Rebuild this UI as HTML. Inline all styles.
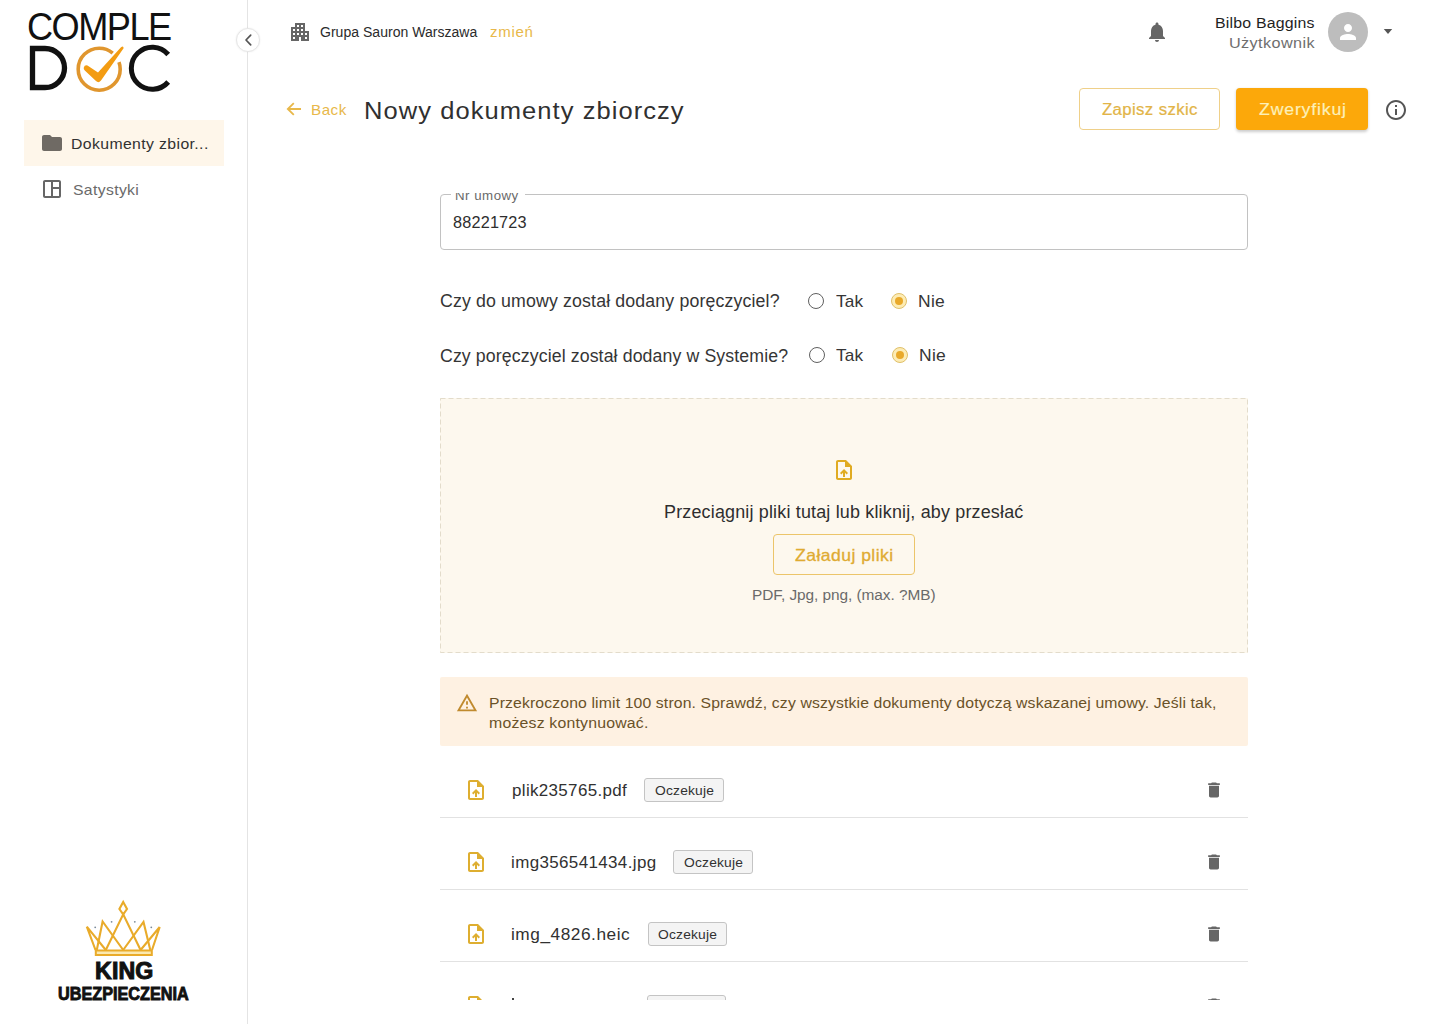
<!DOCTYPE html>
<html><head><meta charset="utf-8">
<style>
*{box-sizing:border-box;margin:0;padding:0}
html,body{width:1440px;height:1024px;overflow:hidden;background:#fff;font-family:"Liberation Sans",sans-serif;color:#222}
.t{position:absolute;white-space:nowrap;font-family:"Liberation Sans",sans-serif}
.a{position:absolute}
svg{position:absolute;overflow:visible}
</style></head><body>
<!-- sidebar -->
<div class="a" style="left:247px;top:0;width:1px;height:1024px;background:#e4e4e4"></div>
<div class="a" style="left:24px;top:120px;width:200px;height:46px;background:#fef6ea"></div>
<!-- logo DOC -->
<svg style="left:0;top:0" width="248" height="100" viewBox="0 0 248 100">
  <path d="M32.5,48.5 H45 A19.5,19.5 0 0 1 45,87.5 H32.5 Z" fill="none" stroke="#111" stroke-width="5.3"/>
  <path d="M168.2,54.5 A21,21 0 1 0 168.2,82" fill="none" stroke="#111" stroke-width="5"/>
  <circle cx="99.2" cy="69.2" r="21" fill="none" stroke="#e0962e" stroke-width="3.6" stroke-dasharray="112.9 11 20" />
  <path d="M83.8,67.5 Q84.5,64.8 87.5,65.5 L98,72.5 L121,47.2 Q123.6,45.6 123.6,48.2 L101,80.5 Q98.5,83.5 96,81 L84.8,70.5 Q83.3,69 83.8,67.5 Z" fill="#f39c12"/>
</svg>
<!-- folder icon -->
<svg style="left:40px;top:131px" width="24" height="24" viewBox="0 0 24 24"><path fill="#6f6a64" d="M10 4H4c-1.1 0-1.99.9-1.99 2L2 18c0 1.1.9 2 2 2h16c1.1 0 2-.9 2-2V8c0-1.1-.9-2-2-2h-8l-2-2z"/></svg>
<!-- dashboard icon -->
<svg style="left:40px;top:177px" width="24" height="24" viewBox="0 0 24 24"><path fill="#666" d="M19 3H5c-1.1 0-2 .9-2 2v14c0 1.1.9 2 2 2h14c1.1 0 2-.9 2-2V5c0-1.1-.9-2-2-2zM5 19V5h6v14H5zm14 0h-6v-7h6v7zm0-9h-6V5h6v5z"/></svg>
<!-- crown -->
<svg style="left:0;top:0" width="248" height="1024" viewBox="0 0 248 1024">
  <g fill="none" stroke="#e9ab2a" stroke-width="2.1" stroke-linejoin="miter">
    <path d="M123.2,902 L127,909 L123.2,914.4 L119.4,909 Z"/>
    <path d="M86.8,926.6 L95.5,950 M86.8,926.6 L105.8,950"/>
    <path d="M96.8,950 L102.6,921.5 L123.2,950"/>
    <path d="M105.8,950 L123.2,914.4 L140.6,950"/>
    <path d="M123.2,950 L143.5,922 L150.3,950"/>
    <path d="M159.7,927 L152,950 M159.7,927 L140.6,950"/>
    <path d="M95.8,950.6 H151.8 V955 H95.8 Z" stroke-width="2" fill="#fbe9b0"/>
  </g>
  <g fill="#7a8a99"><circle cx="95.2" cy="927.3" r="0.9"/><circle cx="111.6" cy="921.8" r="0.9"/><circle cx="134.8" cy="921.8" r="0.9"/><circle cx="151.3" cy="927.3" r="0.9"/></g>
</svg>
<!-- collapse button -->
<div class="a" style="left:236px;top:27.5px;width:24px;height:24px;border-radius:50%;background:#fff;border:1px solid #e6e6e6;box-shadow:0 0 2px rgba(0,0,0,.08)"></div>
<svg style="left:236px;top:27.5px" width="24" height="24" viewBox="0 0 24 24"><path d="M14.7 7.2 L10 12 L14.7 16.8" fill="none" stroke="#555" stroke-width="1.7" stroke-linecap="round" stroke-linejoin="round"/></svg>

<!-- top bar icons -->
<svg style="left:287.5px;top:20px" width="24" height="24" viewBox="0 0 24 24"><path fill="#666" d="M17 11V3H7v4H3v14h8v-4h2v4h8V11h-4zM7 19H5v-2h2v2zm0-4H5v-2h2v2zm0-4H5V9h2v2zm4 4H9v-2h2v2zm0-4H9V9h2v2zm0-4H9V5h2v2zm4 8h-2v-2h2v2zm0-4h-2V9h2v2zm0-4h-2V5h2v2zm4 12h-2v-2h2v2zm0-4h-2v-2h2v2z"/></svg>
<svg style="left:1145px;top:19.5px" width="24" height="24" viewBox="0 0 24 24"><path fill="#666" d="M12 22c1.1 0 2-.9 2-2h-4c0 1.1.89 2 2 2zm6-6v-5c0-3.07-1.64-5.64-4.5-6.32V4c0-.83-.67-1.5-1.5-1.5s-1.5.67-1.5 1.5v.68C7.63 5.36 6 7.92 6 11v5l-2 2v1h16v-1l-2-2z"/></svg>
<div class="a" style="left:1328px;top:12px;width:40px;height:40px;border-radius:50%;background:#bdbdbd"></div>
<svg style="left:1336px;top:20px" width="24" height="24" viewBox="0 0 24 24"><path fill="#fff" d="M12 12c2.21 0 4-1.79 4-4s-1.79-4-4-4-4 1.79-4 4 1.79 4 4 4zm0 2c-2.67 0-8 1.34-8 4v2h16v-2c0-2.66-5.33-4-8-4z"/></svg>
<svg style="left:1376px;top:19px" width="24" height="24" viewBox="0 0 24 24"><path fill="#555" d="M7.8 10l4.2 5 4.2-5z"/></svg>

<!-- back arrow -->
<svg style="left:286px;top:102px" width="16" height="14" viewBox="0 0 16 14"><path d="M15 7H2.2 M7.8 1.2 L1.8 7 L7.8 12.8" fill="none" stroke="#e8b84a" stroke-width="1.8" stroke-linejoin="miter"/></svg>

<!-- buttons -->
<div class="a" style="left:1079px;top:88px;width:141px;height:42px;border:1px solid #efd089;border-radius:4px"></div>
<div class="a" style="left:1236px;top:88px;width:132px;height:42px;background:#fca80a;border-radius:4px;box-shadow:0 1.5px 3px rgba(0,0,0,.2)"></div>
<svg style="left:1384.3px;top:98px" width="24" height="24" viewBox="0 0 24 24"><path fill="#555" d="M11 7h2v2h-2zm0 4h2v6h-2zm1-9C6.48 2 2 6.48 2 12s4.48 10 10 10 10-4.48 10-10S17.52 2 12 2zm0 18c-4.41 0-8-3.59-8-8s3.59-8 8-8 8 3.59 8 8-3.59 8-8 8z"/></svg>

<!-- text field -->
<div class="a" style="left:440px;top:194px;width:808px;height:56px;border:1px solid #c2c2c2;border-radius:4px"></div>
<div class="a" style="left:451px;top:190px;width:74px;height:8px;background:#fff"></div>

<!-- radios -->
<div class="a" style="left:807.5px;top:292.5px;width:16.5px;height:16.5px;border-radius:50%;border:1.9px solid #606060"></div>
<div class="a" style="left:890.5px;top:292.5px;width:16.5px;height:16.5px;border-radius:50%;border:1.3px solid #e0c06a;background:#fdecb4"></div>
<div class="a" style="left:894.75px;top:296.75px;width:8px;height:8px;border-radius:50%;background:#e9a92a"></div>
<div class="a" style="left:808.5px;top:346.5px;width:16.5px;height:16.5px;border-radius:50%;border:1.9px solid #606060"></div>
<div class="a" style="left:891.5px;top:346.5px;width:16.5px;height:16.5px;border-radius:50%;border:1.3px solid #e0c06a;background:#fdecb4"></div>
<div class="a" style="left:895.75px;top:350.75px;width:8px;height:8px;border-radius:50%;background:#e9a92a"></div>

<!-- dropzone -->
<div class="a" style="left:440px;top:398px;width:808px;height:255px;background:#fdf8ee"></div>
<svg style="left:440px;top:398px" width="808" height="255" viewBox="0 0 808 255"><rect x="0.5" y="0.5" width="807" height="254" fill="none" stroke="#e3dccb" stroke-width="1" stroke-dasharray="5 3"/></svg>
<svg style="left:831.6px;top:457.5px" width="24" height="24" viewBox="0 0 24 24"><path fill="#e0ab22" d="M14 2H6c-1.1 0-1.99.9-1.99 2L4 20c0 1.1.89 2 1.99 2H18c1.1 0 2-.9 2-2V8l-6-6zm4 18H6V4h7v5h5v11zM8 15.01l1.41 1.41L11 14.84V19h2v-4.16l1.59 1.59L16 15.01 12.01 11 8 15.01z"/></svg>
<div class="a" style="left:773px;top:533.5px;width:142px;height:41px;border:1px solid #ecc56a;border-radius:4px"></div>

<!-- alert -->
<div class="a" style="left:440px;top:677px;width:808px;height:69px;background:#fef1e2;border-radius:2px"></div>
<svg style="left:456px;top:692px" width="22" height="22" viewBox="0 0 24 24"><path fill="#c08a2e" d="M12 5.99L19.53 19H4.47L12 5.99M12 2L1 21h22L12 2zm1 14h-2v2h2v-2zm0-6h-2v4h2v-4z"/></svg>

<!-- file rows -->
<svg style="left:464px;top:778px" width="24" height="24" viewBox="0 0 24 24"><path fill="#deae30" d="M14 2H6c-1.1 0-1.99.9-1.99 2L4 20c0 1.1.89 2 1.99 2H18c1.1 0 2-.9 2-2V8l-6-6zm4 18H6V4h7v5h5v11zM8 15.01l1.41 1.41L11 14.84V19h2v-4.16l1.59 1.59L16 15.01 12.01 11 8 15.01z"/></svg>
<svg style="left:464px;top:850px" width="24" height="24" viewBox="0 0 24 24"><path fill="#deae30" d="M14 2H6c-1.1 0-1.99.9-1.99 2L4 20c0 1.1.89 2 1.99 2H18c1.1 0 2-.9 2-2V8l-6-6zm4 18H6V4h7v5h5v11zM8 15.01l1.41 1.41L11 14.84V19h2v-4.16l1.59 1.59L16 15.01 12.01 11 8 15.01z"/></svg>
<svg style="left:464px;top:922px" width="24" height="24" viewBox="0 0 24 24"><path fill="#deae30" d="M14 2H6c-1.1 0-1.99.9-1.99 2L4 20c0 1.1.89 2 1.99 2H18c1.1 0 2-.9 2-2V8l-6-6zm4 18H6V4h7v5h5v11zM8 15.01l1.41 1.41L11 14.84V19h2v-4.16l1.59 1.59L16 15.01 12.01 11 8 15.01z"/></svg>
<div class="a" style="left:644px;top:778px;width:80px;height:23.5px;border:1px solid #c4c4c4;border-radius:3px;background:#f4f4f4"></div>
<div class="a" style="left:673px;top:850px;width:80px;height:23.5px;border:1px solid #c4c4c4;border-radius:3px;background:#f4f4f4"></div>
<div class="a" style="left:647.5px;top:922px;width:79.5px;height:23.5px;border:1px solid #c4c4c4;border-radius:3px;background:#f4f4f4"></div>
<svg style="left:1204px;top:780px" width="20" height="20" viewBox="0 0 24 24"><path fill="#666" d="M6 19c0 1.1.9 2 2 2h8c1.1 0 2-.9 2-2V7H6v12zM19 4h-3.5l-1-1h-5l-1 1H5v2h14V4z"/></svg>
<svg style="left:1204px;top:852px" width="20" height="20" viewBox="0 0 24 24"><path fill="#666" d="M6 19c0 1.1.9 2 2 2h8c1.1 0 2-.9 2-2V7H6v12zM19 4h-3.5l-1-1h-5l-1 1H5v2h14V4z"/></svg>
<svg style="left:1204px;top:924px" width="20" height="20" viewBox="0 0 24 24"><path fill="#666" d="M6 19c0 1.1.9 2 2 2h8c1.1 0 2-.9 2-2V7H6v12zM19 4h-3.5l-1-1h-5l-1 1H5v2h14V4z"/></svg>
<div class="a" style="left:440px;top:817px;width:808px;height:1px;background:#e2e2e2"></div>
<div class="a" style="left:440px;top:889px;width:808px;height:1px;background:#e2e2e2"></div>
<div class="a" style="left:440px;top:961px;width:808px;height:1px;background:#e2e2e2"></div>
<!-- row 4 clipped -->
<div class="a" style="left:440px;top:990px;width:808px;height:9.5px;overflow:hidden">
  <svg style="left:24px;top:4px" width="24" height="24" viewBox="0 0 24 24"><path fill="#deae30" d="M14 2H6c-1.1 0-1.99.9-1.99 2L4 20c0 1.1.89 2 1.99 2H18c1.1 0 2-.9 2-2V8l-6-6zm4 18H6V4h7v5h5v11zM8 15.01l1.41 1.41L11 14.84V19h2v-4.16l1.59 1.59L16 15.01 12.01 11 8 15.01z"/></svg>
  <div class="a" style="left:206.5px;top:4.5px;width:79.5px;height:23.5px;border:1px solid #c4c4c4;border-radius:3px;background:#f4f4f4"></div>
  <svg style="left:764px;top:6px" width="20" height="20" viewBox="0 0 24 24"><path fill="#666" d="M6 19c0 1.1.9 2 2 2h8c1.1 0 2-.9 2-2V7H6v12zM19 4h-3.5l-1-1h-5l-1 1H5v2h14V4z"/></svg>
  <div class="a" style="left:72px;top:8px;width:2px;height:2px;background:#444"></div>
</div>

<div class="t" style="left:320.00px;top:25.20px;font-size:14px;line-height:14px;letter-spacing:0.016px;transform:scaleX(1.0020);transform-origin:0 0;color:#2b2b2b;font-weight:400;">Grupa Sauron Warszawa</div>
<div class="t" style="left:490.00px;top:25.20px;font-size:14px;line-height:14px;letter-spacing:0.633px;transform:scaleX(1.0744);transform-origin:0 0;color:#e8b84a;font-weight:400;">zmień</div>
<div class="t" style="left:1214.57px;top:15.00px;font-size:15.5px;line-height:15.5px;letter-spacing:0.194px;transform:scaleX(1.0253);transform-origin:0 0;color:#1f1f1f;font-weight:400;">Bilbo Baggins</div>
<div class="t" style="left:1228.55px;top:34.80px;font-size:15.5px;line-height:15.5px;letter-spacing:0.381px;transform:scaleX(1.0462);transform-origin:0 0;color:#6e6e6e;font-weight:400;">Użytkownik</div>
<div class="t" style="left:310.95px;top:103.00px;font-size:14.5px;line-height:14.5px;letter-spacing:0.480px;transform:scaleX(1.0471);transform-origin:0 0;color:#e8b84a;font-weight:400;">Back</div>
<div class="t" style="left:363.91px;top:100.40px;font-size:23.5px;line-height:23.5px;letter-spacing:0.975px;transform:scaleX(1.0856);transform-origin:0 0;color:#303030;font-weight:400;">Nowy dokumenty zbiorczy</div>
<div class="t" style="left:1101.60px;top:102.30px;font-size:16px;line-height:16px;letter-spacing:0.359px;transform:scaleX(1.0475);transform-origin:0 0;color:#e2b447;font-weight:400;-webkit-text-stroke:0.2px #e2b447;">Zapisz szkic</div>
<div class="t" style="left:1258.60px;top:102.30px;font-size:16px;line-height:16px;letter-spacing:0.752px;transform:scaleX(1.1046);transform-origin:0 0;color:#fdf0b8;font-weight:400;-webkit-text-stroke:0.2px #fdf0b8;">Zweryfikuj</div>
<div class="t" style="left:452.60px;top:214.80px;font-size:16px;line-height:16px;letter-spacing:0.169px;transform:scaleX(1.0169);transform-origin:0 0;color:#2e2e2e;font-weight:400;">88221723</div>
<div class="t" style="left:440.30px;top:293.10px;font-size:17.5px;line-height:17.5px;letter-spacing:0.127px;transform:scaleX(1.0148);transform-origin:0 0;color:#353535;font-weight:400;">Czy do umowy został dodany poręczyciel?</div>
<div class="t" style="left:440.30px;top:347.60px;font-size:17.5px;line-height:17.5px;letter-spacing:0.106px;transform:scaleX(1.0126);transform-origin:0 0;color:#353535;font-weight:400;">Czy poręczyciel został dodany w Systemie?</div>
<div class="t" style="left:835.50px;top:292.90px;font-size:17px;line-height:17px;letter-spacing:0.184px;transform:scaleX(1.0138);transform-origin:0 0;color:#353535;font-weight:400;">Tak</div>
<div class="t" style="left:917.67px;top:292.90px;font-size:17px;line-height:17px;letter-spacing:0.304px;transform:scaleX(1.0259);transform-origin:0 0;color:#353535;font-weight:400;">Nie</div>
<div class="t" style="left:836.30px;top:347.40px;font-size:17px;line-height:17px;letter-spacing:0.184px;transform:scaleX(1.0138);transform-origin:0 0;color:#353535;font-weight:400;">Tak</div>
<div class="t" style="left:918.67px;top:347.40px;font-size:17px;line-height:17px;letter-spacing:0.304px;transform:scaleX(1.0259);transform-origin:0 0;color:#353535;font-weight:400;">Nie</div>
<div class="t" style="left:663.88px;top:504.00px;font-size:17.5px;line-height:17.5px;letter-spacing:0.172px;transform:scaleX(1.0247);transform-origin:0 0;color:#2e2e2e;font-weight:400;">Przeciągnij pliki tutaj lub kliknij, aby przesłać</div>
<div class="t" style="left:795.00px;top:546.60px;font-size:16.5px;line-height:16.5px;letter-spacing:0.432px;transform:scaleX(1.0639);transform-origin:0 0;color:#dfab32;font-weight:400;-webkit-text-stroke:0.3px #dfab32;">Załaduj pliki</div>
<div class="t" style="left:752.01px;top:587.00px;font-size:15.5px;line-height:15.5px;letter-spacing:-0.052px;transform:scaleX(0.9932);transform-origin:0 0;color:#6a6a6a;font-weight:400;">PDF, Jpg, png, (max. ?MB)</div>
<div class="t" style="left:489.48px;top:695.30px;font-size:15.5px;line-height:15.5px;letter-spacing:0.125px;transform:scaleX(1.0176);transform-origin:0 0;color:#6a5228;font-weight:400;">Przekroczono limit 100 stron. Sprawdź, czy wszystkie dokumenty dotyczą wskazanej umowy. Jeśli tak,</div>
<div class="t" style="left:489.48px;top:715.30px;font-size:15.5px;line-height:15.5px;letter-spacing:0.185px;transform:scaleX(1.0227);transform-origin:0 0;color:#6a5228;font-weight:400;">możesz kontynuować.</div>
<div class="t" style="left:511.76px;top:781.80px;font-size:16.3px;line-height:16.3px;letter-spacing:0.325px;transform:scaleX(1.0418);transform-origin:0 0;color:#313131;font-weight:400;">plik235765.pdf</div>
<div class="t" style="left:511.46px;top:853.80px;font-size:16.3px;line-height:16.3px;letter-spacing:0.354px;transform:scaleX(1.0420);transform-origin:0 0;color:#313131;font-weight:400;">img356541434.jpg</div>
<div class="t" style="left:511.44px;top:925.80px;font-size:16.3px;line-height:16.3px;letter-spacing:0.500px;transform:scaleX(1.0608);transform-origin:0 0;color:#313131;font-weight:400;">img_4826.heic</div>
<div class="t" style="left:654.70px;top:783.90px;font-size:13.5px;line-height:13.5px;letter-spacing:0.184px;transform:scaleX(1.0236);transform-origin:0 0;color:#313131;font-weight:400;">Oczekuje</div>
<div class="t" style="left:683.70px;top:855.90px;font-size:13.5px;line-height:13.5px;letter-spacing:0.184px;transform:scaleX(1.0236);transform-origin:0 0;color:#313131;font-weight:400;">Oczekuje</div>
<div class="t" style="left:658.00px;top:927.90px;font-size:13.5px;line-height:13.5px;letter-spacing:0.184px;transform:scaleX(1.0236);transform-origin:0 0;color:#313131;font-weight:400;">Oczekuje</div>
<div class="t" style="left:71.45px;top:136.00px;font-size:15px;line-height:15px;letter-spacing:0.362px;transform:scaleX(1.0530);transform-origin:0 0;color:#313131;font-weight:400;">Dokumenty zbior...</div>
<div class="t" style="left:72.50px;top:182.00px;font-size:15px;line-height:15px;letter-spacing:0.347px;transform:scaleX(1.0487);transform-origin:0 0;color:#6a6a6a;font-weight:400;">Satystyki</div>
<div class="t" style="left:94.69px;top:960.00px;font-size:23px;line-height:23px;letter-spacing:0.147px;transform:scaleX(1.0080);transform-origin:0 0;color:#111;font-weight:700;-webkit-text-stroke:1px #111;">KING</div>
<div class="t" style="left:57.82px;top:985.00px;font-size:18.5px;line-height:18.5px;letter-spacing:0.000px;transform:scaleX(0.8776);transform-origin:0 0;color:#111;font-weight:700;-webkit-text-stroke:0.9px #111;">UBEZPIECZENIA</div>
<div class="t" style="left:27.05px;top:7.60px;font-size:38px;line-height:38px;letter-spacing:-1.589px;transform:scaleX(0.9521);transform-origin:0 0;color:#111;font-weight:400;">COMPLE</div>
<div class="t" style="left:455.14px;top:189.70px;font-size:12.5px;line-height:12.5px;letter-spacing:0.470px;transform:scaleX(1.0624);transform-origin:0 0;color:#6a6a6a;font-weight:400;">Nr umowy</div>
<!-- label clip cover -->
<div class="a" style="left:451px;top:180px;width:80px;height:12.5px;background:#fff"></div>
</body></html>
